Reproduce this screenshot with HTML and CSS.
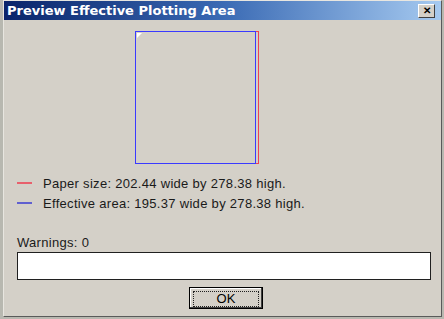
FILE: index.html
```html
<!DOCTYPE html>
<html lang="en">

<head>
    <meta charset="utf-8">
    <title>Preview Effective Plotting Area</title>
    <link rel="stylesheet" href="styles.css">
</head>

<body>
    <div class="vindue">
        <div class="titel">
            <span>Preview Effective Plotting Area</span>
            <button class="luk">&#x2715;</button>
        </div>

        <div class="indhold">
            <div class="preview">
                <div class="papir">
                    <div class="effektiv"></div>
                    <div class="hjorne"></div>
                </div>
            </div>

            <div class="forklaring">
                <div class="linje"><span class="streg rod"></span>Paper size: 202.44 wide by 278.38 high.</div>
                <div class="linje"><span class="streg blaa"></span>Effective area: 195.37 wide by 278.38 high.</div>
            </div>

            <p class="advarsler">Warnings: 0</p>
            <div class="boks"></div>

            <div class="knapper">
                <button class="ok"><span>OK</span></button>
            </div>
        </div>
    </div>
</body>

</html>
```

FILE: styles.css
```css
body {
    margin: 0;
    background-color: #b8b8b0;
    font-family: "Liberation Sans", Arial, sans-serif;
    font-size: 13px;
    letter-spacing: 0.3px;
}

.vindue {
    box-sizing: border-box;
    width: 439px;
    height: 317px;
    margin-left: 3px;
    background-color: #d4d0c8;
    border-top: 1px solid #e8e6e0;
    border-left: 1px solid #e8e6e0;
    border-right: 1px solid #5a5a5a;
    border-bottom: 1px solid #5a5a5a;
}

.titel {
    height: 19px;
    display: flex;
    align-items: center;
    justify-content: space-between;
    padding: 0 6px 0 3px;
    background: linear-gradient(to right, #0a246a 0%, #3a6ab4 50%, #a6caf0 100%);
    color: white;
    font-family: "DejaVu Sans", Verdana, sans-serif;
    font-weight: bold;
    font-size: 13px;
    letter-spacing: 0;
}

.luk {
    box-sizing: border-box;
    width: 17px;
    height: 14px;
    padding: 0;
    background-color: #d4d0c8;
    border: 1px solid;
    border-color: #ffffff #404040 #404040 #ffffff;
    font-size: 10px;
    font-weight: bold;
    line-height: 12px;
    color: black;
}

.indhold {
    padding: 0 11px 0 12px;
}

.preview {
    padding: 11px 0 0 119px;
    height: 140px;
}

.papir {
    position: relative;
    box-sizing: border-box;
    width: 124px;
    height: 133px;
    border: 1px solid #f04050;
}

.effektiv {
    position: absolute;
    top: -1px;
    left: -1px;
    box-sizing: border-box;
    width: 121px;
    height: 133px;
    border: 1px solid #3a3aff;
}

.hjorne {
    position: absolute;
    top: 1px;
    left: 1px;
    width: 0;
    height: 0;
    border-top: 5px solid white;
    border-right: 5px solid transparent;
}

.forklaring {
    padding-top: 2px;
}

.linje {
    display: flex;
    align-items: center;
    height: 20px;
    color: #1a1a1a;
}

.streg {
    width: 15px;
    height: 2px;
    margin: 0 11px 0 1px;
}

.rod {
    background-color: #e8606c;
}

.blaa {
    background-color: #6060d0;
}

.advarsler {
    margin: 22px 0 0 1px;
    color: #1a1a1a;
    line-height: 15px;
}

.boks {
    box-sizing: border-box;
    width: 414px;
    height: 28px;
    margin: 2px 0 0 1px;
    background-color: white;
    border: 1px solid #202020;
}

.knapper {
    display: flex;
    justify-content: center;
    padding: 7px 0 0 6px;
}

.ok {
    box-sizing: border-box;
    width: 74px;
    height: 22px;
    padding: 3px;
    background-color: #d4d0c8;
    border: 1px solid black;
    box-shadow: inset -1px -1px #404040, inset 1px 1px white;
    font-family: "Liberation Sans", Arial, sans-serif;
    font-size: 13px;
}

.ok span {
    display: block;
    height: 14px;
    line-height: 14px;
    border: 1px dotted #202020;
    color: black;
}
```
